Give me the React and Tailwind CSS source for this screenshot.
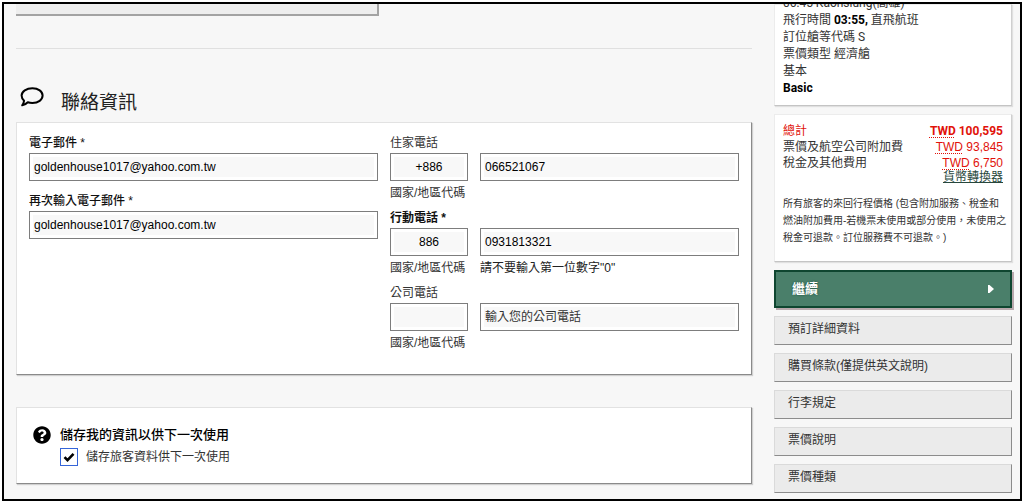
import { FaQuestionCircle } from 'react-icons/fa'

const SIDE_LINKS = ['預訂詳細資料', '購買條款(僅提供英文說明)', '行李規定', '票價說明', '票價種類']

const CARD = 'bg-white border border-[#e2e2e2] border-r-[#8a8a8a] border-b-[#8a8a8a] shadow-[1px_1px_1px_#d0d0d0]'
const SIDE_CARD = 'bg-white border border-[#ececec] border-r-[#cfcfcf] border-b-[#c4c4c4] shadow-[1px_1px_1px_#e0e0e0]'
const INPUT =
  'block w-full h-7 px-1 text-xs text-black bg-[#f8f8f8] border border-[#7d7d7d] ring-3 ring-inset ring-white outline-none placeholder:text-[#333]'

function EmailField({ id, label, value }) {
  return (
    <div>
      <label htmlFor={id} className="block h-[18px] leading-4 font-medium text-[#111]">
        {label}
      </label>
      <input id={id} type="email" defaultValue={value} className={INPUT} />
    </div>
  )
}

function PhoneField({ id, label, required, code, value, placeholder, hint }) {
  return (
    <div>
      <label
        htmlFor={id}
        className={`block h-[18px] leading-4 ${required ? 'font-bold text-[#111]' : 'text-[#333]'}`}
      >
        {label}
      </label>
      <div className="grid grid-cols-[78px_1fr] gap-x-3">
        <input
          id={`${id}-code`}
          type="text"
          defaultValue={code}
          className={`${INPUT} text-center`}
        />
        <input
          id={id}
          type="tel"
          defaultValue={value}
          placeholder={placeholder}
          className={INPUT}
        />
        <label htmlFor={`${id}-code`} className="h-[29px] pt-1 leading-4 whitespace-nowrap text-[#333]">
          國家/地區代碼
        </label>
        {hint && <span className="pt-1 leading-4 text-[#222]">{hint}</span>}
      </div>
    </div>
  )
}

function Price({ amount, className }) {
  return (
    <dd className={`text-[#e1120a] ${className}`}>
      <abbr className="underline decoration-dotted underline-offset-2">TWD</abbr> {amount}
    </dd>
  )
}

export default function App() {
  return (
    <div className="h-screen p-[2px] bg-white text-xs font-['Liberation_Sans','Noto_Sans_CJK_TC',sans-serif]">
      <div className="flex h-full gap-[22px] overflow-hidden border-2 border-black bg-[#f7f7f7] pl-3 pr-2">
        <main className="min-w-0 flex-1">
          <div className="h-3 w-[363px] border-r-2 border-b-2 border-[#a3a3a3] bg-[#eeeeee]" />
          <hr className="mt-8 border-[#e0e0e0]" />

          <h2 className="mt-[38px] flex h-[35px] items-start text-[19px] leading-8 text-[#222]">
            <svg viewBox="0 0 24 20" className="mr-[17px] ml-1 h-5 w-6">
              <path
                d="M12.4 1.2C18.3 1.2 22.6 4.4 22.6 8.6S18.3 16 12.4 16c-1.7 0-3.2-.2-4.6-.7-1.4 1.5-3.2 2.7-5.6 3 1-1.300 1.700-2.800 1.900-4.600C2.500 12.300 1.600 10.500 1.600 8.600 1.600 4.400 6.500 1.200 12.400 1.200z"
                fill="none"
                stroke="#000"
                strokeWidth="2"
                strokeLinejoin="round"
              />
            </svg>
            聯絡資訊
          </h2>

          <section className={`${CARD} grid h-[253px] grid-cols-[349px_1fr] gap-x-3 px-3 pt-3`}>
            <div className="flex flex-col gap-3">
              <EmailField id="email" label="電子郵件 *" value="goldenhouse1017@yahoo.com.tw" />
              <EmailField
                id="email-again"
                label="再次輸入電子郵件 *"
                value="goldenhouse1017@yahoo.com.tw"
              />
            </div>
            <div>
              <PhoneField id="home" label="住家電話" code="+886" value="066521067" />
              <PhoneField
                id="mobile"
                label="行動電話 *"
                required
                code="886"
                value="0931813321"
                hint={'請不要輸入第一位數字"0"'}
              />
              <PhoneField id="office" label="公司電話" placeholder="輸入您的公司電話" />
            </div>
          </section>

          <section className={`${CARD} mt-8 flex h-[77px] gap-[9px] pt-[18px] pl-4`}>
            <FaQuestionCircle className="size-[18px] text-black" />
            <div>
              <h3 className="text-[13px] leading-[18px] font-medium text-black">
                儲存我的資訊以供下一次使用
              </h3>
              <label className="mt-1 flex items-center gap-2 text-[#333]">
                <span className="grid size-[18px]">
                  <input
                    type="checkbox"
                    defaultChecked
                    className="peer col-start-1 row-start-1 size-[18px] appearance-none border border-[#3565d8] bg-white"
                  />
                  <svg
                    viewBox="0 0 18 18"
                    className="pointer-events-none col-start-1 row-start-1 hidden size-[18px] peer-checked:block"
                  >
                    <path d="M4.5 9.2l3 3 6-6.400" fill="none" stroke="#000" strokeWidth="2.6" />
                  </svg>
                </span>
                儲存旅客資料供下一次使用
              </label>
            </div>
          </section>
        </main>

        <aside className="w-[238px] shrink-0">
          <section
            className={`${SIDE_CARD} flex h-[102px] flex-col justify-end px-2 pb-2 leading-[17px] text-[#333] font-[Roboto,'Noto_Sans_CJK_TC',sans-serif]`}
          >
            <p>06:45 Kaohsiung(高雄)</p>
            <p>
              飛行時間 <b className="text-black">03:55,</b> 直飛航班
            </p>
            <p>訂位艙等代碼 S</p>
            <p>票價類型 經濟艙</p>
            <p>基本</p>
            <p className="font-bold text-black">Basic</p>
          </section>

          <section className={`${SIDE_CARD} mt-2 h-[148px] pt-2 pl-2 text-[#333]`}>
            <dl className="pr-2 leading-4">
              <div className="flex justify-between">
                <dt className="text-[#e1120a]">總計</dt>
                <Price amount="100,595" className="font-bold font-[Roboto,sans-serif]" />
              </div>
              <div className="flex justify-between">
                <dt>票價及航空公司附加費</dt>
                <Price amount="93,845" />
              </div>
              <div className="flex justify-between">
                <dt>稅金及其他費用</dt>
                <Price amount="6,750" />
              </div>
            </dl>
            <a href="#currency" className="block pr-2 text-right leading-3 text-[#27473c] underline">
              貨幣轉換器
            </a>
            <p className="mt-3 text-[10px] leading-[17px] whitespace-nowrap">
              所有旅客的來回行程價格 (包含附加服務、稅金和
              <br />
              燃油附加費用-若機票未使用或部分使用，未使用之
              <br />
              稅金可退款。訂位服務費不可退款。)
            </p>
          </section>

          <button
            type="button"
            className="mt-2 flex h-[38px] w-full items-center justify-between border-2 border-[#0f4630] bg-[#4a7f6a] px-4 text-[13px] font-bold text-white shadow-[2px_2px_0_#b9a9ad] text-shadow-[0_0_2px_#0f4630]"
          >
            繼續
            <svg viewBox="0 0 6 8" className="h-2 w-[6px]">
              <path d="M0 0h1.500L6 4 1.500 8H0z" fill="#fff" />
            </svg>
          </button>

          <nav className="mt-2 flex flex-col gap-2">
            {SIDE_LINKS.map((label) => (
              <a
                key={label}
                href="#details"
                className="block h-[29px] border border-[#dadada] border-r-[#8c8c8c] border-b-[#8c8c8c] bg-[#ebebeb] px-[13px] leading-6 text-[#333]"
              >
                {label}
              </a>
            ))}
          </nav>
        </aside>
      </div>
    </div>
  )
}
